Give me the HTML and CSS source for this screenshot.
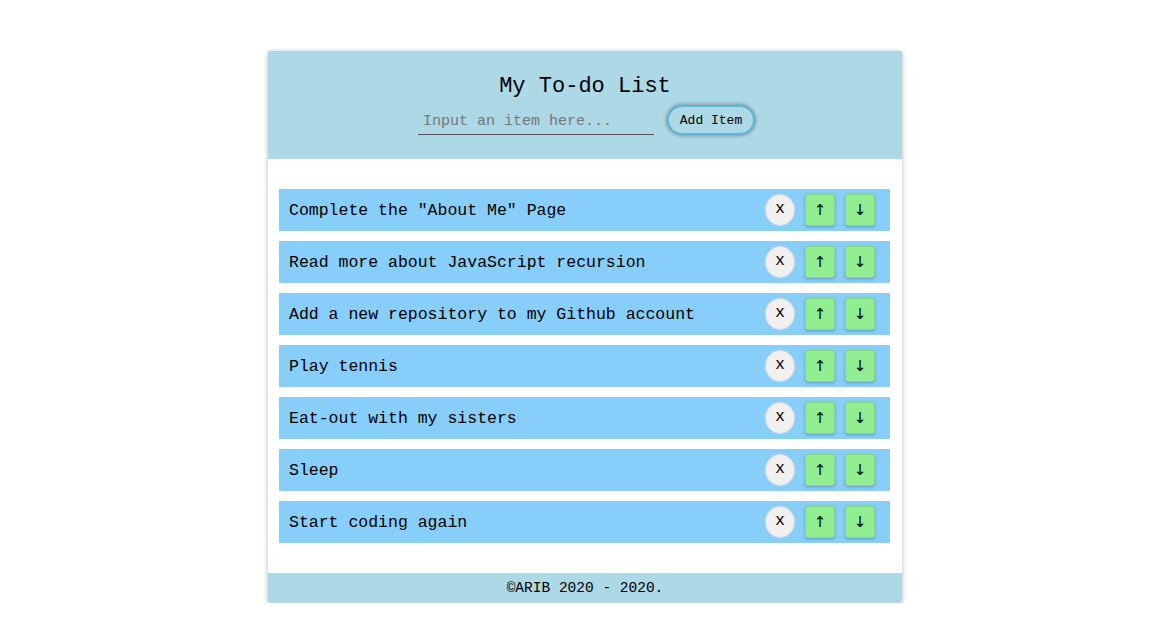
FILE: index.html
```html
<!DOCTYPE html>
<html>
<head>
<meta charset="utf-8">
<title>My To-do List</title>
<link rel="stylesheet" href="styles.css">
</head>
<body>
<div class="card">
  <header class="head">
    <h1 class="title">My To-do List</h1>
    <div class="entry">
      <input class="field" type="text" placeholder="Input an item here...">
      <button class="add">Add Item</button>
    </div>
  </header>
  <ul class="list">
    <li class="item"><span class="label">Complete the "About Me" Page</span><span class="actions"><button class="del">x</button><button class="move">↑</button><button class="move">↓</button></span></li>
    <li class="item"><span class="label">Read more about JavaScript recursion</span><span class="actions"><button class="del">x</button><button class="move">↑</button><button class="move">↓</button></span></li>
    <li class="item"><span class="label">Add a new repository to my Github account</span><span class="actions"><button class="del">x</button><button class="move">↑</button><button class="move">↓</button></span></li>
    <li class="item"><span class="label">Play tennis</span><span class="actions"><button class="del">x</button><button class="move">↑</button><button class="move">↓</button></span></li>
    <li class="item"><span class="label">Eat-out with my sisters</span><span class="actions"><button class="del">x</button><button class="move">↑</button><button class="move">↓</button></span></li>
    <li class="item"><span class="label">Sleep</span><span class="actions"><button class="del">x</button><button class="move">↑</button><button class="move">↓</button></span></li>
    <li class="item"><span class="label">Start coding again</span><span class="actions"><button class="del">x</button><button class="move">↑</button><button class="move">↓</button></span></li>
  </ul>
  <footer class="foot">©ARIB 2020 - 2020.</footer>
</div>
</body>
</html>
```
FILE: styles.css
```css
* { box-sizing: border-box; }
html, body { margin: 0; padding: 0; background: #fff; }
body {
  font-family: "Liberation Mono", "DejaVu Sans Mono", monospace;
  color: #000;
  padding-top: 51px;
}
.card {
  width: 634px;
  margin: 0 auto;
  background: #fff;
  border-radius: 2px;
  box-shadow: 0 1px 5px rgba(0,0,0,0.3);
  overflow: hidden;
}
.head {
  background: #add8e6;
  height: 108px;
  display: flex;
  flex-direction: column;
  align-items: center;
  padding-top: 22px;
}
.title {
  margin: 0;
  font-size: 22px;
  font-weight: normal;
  line-height: 28px;
}
.entry {
  display: flex;
  align-items: center;
  gap: 13px;
  margin-top: 4px;
  margin-left: 3px;
}
.field {
  width: 236px;
  height: 29px;
  border: none;
  border-bottom: 1px solid #555;
  background: transparent;
  font-family: inherit;
  font-size: 15px;
  padding: 3px 5px 0;
  outline: none;
}
.field::placeholder { color: #777; }
.add {
  width: 88px;
  height: 30px;
  border-radius: 15px;
  border: 2px solid #62b4dc;
  background: #add8e6;
  font-family: inherit;
  font-size: 13px;
  color: #000;
  box-shadow: 0 0 4px rgba(0,0,0,0.45);
  padding: 0;
}
.list {
  list-style: none;
  margin: 0;
  padding: 30px 12px 30px 11px;
  display: flex;
  flex-direction: column;
  gap: 10px;
}
.item {
  height: 42px;
  background: #87cefa;
  display: flex;
  align-items: center;
  justify-content: space-between;
  padding: 0 15px 0 10px;
}
.label {
  font-size: 16.5px;
}
.actions {
  display: flex;
  align-items: center;
  gap: 10px;
}
.del {
  width: 30px;
  height: 32px;
  border-radius: 50%;
  border: 1px solid #d8d8d8;
  background: #f0f0f0;
  font-family: "Liberation Mono", monospace;
  font-size: 16px;
  font-weight: normal;
  padding: 0 0 2px 0;
  color: #000;
}
.move {
  width: 30px;
  height: 32px;
  border-radius: 3px;
  border: 1px solid #8cd68c;
  background: #90ee90;
  font-family: "DejaVu Sans", sans-serif;
  font-size: 15px;
  padding: 0;
  color: #000;
  box-shadow: 0 1px 3px rgba(0,0,0,0.25);
}
.foot {
  background: #add8e6;
  height: 30px;
  display: flex;
  align-items: center;
  justify-content: center;
  font-size: 14.5px;
}
```
